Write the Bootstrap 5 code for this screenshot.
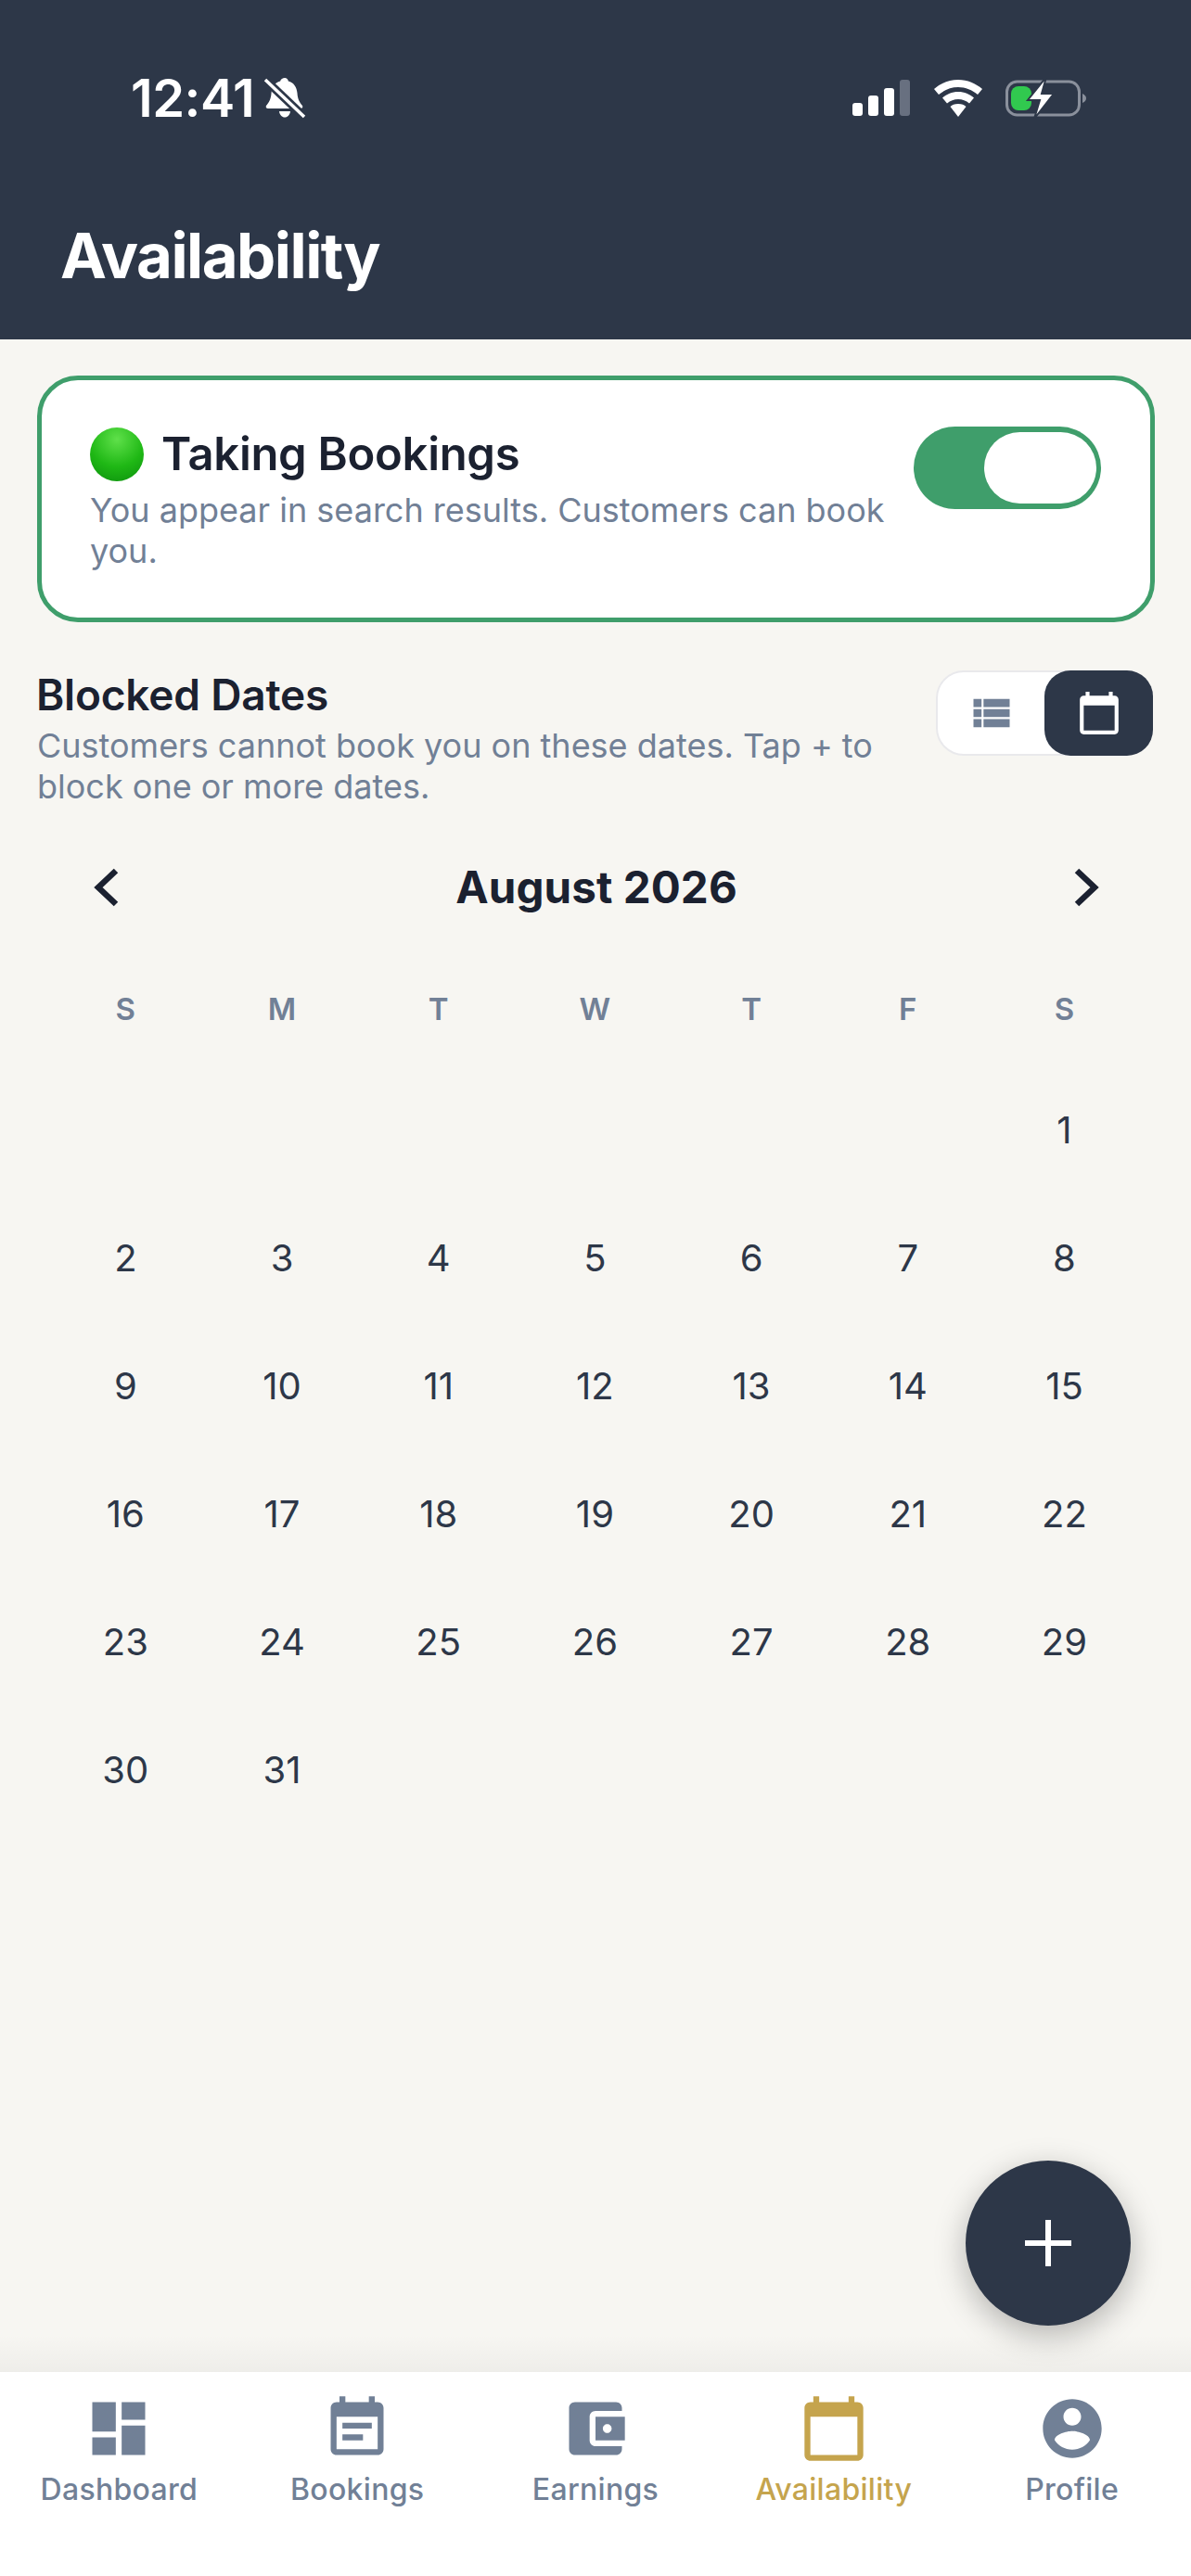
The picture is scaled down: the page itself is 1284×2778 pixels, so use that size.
<!DOCTYPE html>
<html lang="en">
<head>
  <meta charset="UTF-8">
  <title>Availability</title>
  <link href="https://cdn.jsdelivr.net/npm/bootstrap@5.3.3/dist/css/bootstrap.min.css" rel="stylesheet">
  <style>
    body { font-family: Inter, "Liberation Sans", sans-serif; background: #f7f6f2; color: #1b2130; width: 1284px; height: 2778px; overflow: hidden; }
    .app-shell { height: 2778px; position: relative; }
    .top-bar { height: 366px; background: #2d3748; color: #fff; padding: 80px 66px 0; }
    .status-row { height: 52px; padding: 0 0 0 75px; }
    .clock { font-size: 56px; font-weight: 600; letter-spacing: -0.5px; line-height: 52px; }
    .screen-title { font-size: 67px; font-weight: 700; letter-spacing: -1.5px; line-height: 72px; margin: 108px 0 0 -1px; }
    .main-area { padding: 39px 39px 0 40px; position: relative; }
    .book-card { height: 266px; border: 5px solid #3f9e6b; border-radius: 44px; background: #fff; padding: 50px 53px 0 52px; }
    .book-title { font-size: 49px; font-weight: 600; line-height: 60px; letter-spacing: -0.3px; gap: 19px; }
    .green-dot { width: 58px; height: 58px; border-radius: 50%; background: radial-gradient(circle at 50% 22%, #5fe04a 0%, #1fb815 55%, #0b8f0d 100%); flex: none; }
    .muted-line { font-size: 36px; line-height: 44px; color: #718096; margin: 0; }
    .switch-track { width: 202px; height: 89px; flex: none; border-radius: 45px; background: #3f9e6b; padding: 6px 5px 6px 76px; }
    .switch-knob { height: 100%; background: #fff; border-radius: 40px; }
    .blocked-head { margin-top: 52px; }
    .blocked-title { font-size: 46px; font-weight: 600; line-height: 52px; margin: 0 0 7px -1px; letter-spacing: -0.2px; }
    .view-switch { width: 234px; height: 92px; flex: none; border-radius: 30px; background: #fff; border: 2px solid #e9e9ec; margin-right: 2px; }
    .view-btn { width: 115px; border-radius: 28px; }
    .view-btn.on { width: 117px; background: #2d3748; margin: -2px -2px -2px 0; }
    .cal-head { padding: 0 59px 0 60px; margin-top: 52px; height: 70px; }
    .month-name { font-size: 47.500px; font-weight: 700; letter-spacing: 0.1px; }
    .cal-grid { display: grid; grid-template-columns: repeat(7, 168.7px); grid-template-rows: 122px; grid-auto-rows: 138px; margin: 36px 0 0 11px; }
    .cal-grid > div { display: flex; align-items: center; justify-content: center; font-size: 40px; color: #2d3748; }
    .cal-grid > .week-cell { font-size: 33px; font-weight: 600; color: #718096; }
    .plus-fab { position: absolute; left: 1041px; top: 2330px; width: 178px; height: 178px; border-radius: 50%; background: #2d3748; box-shadow: 0 10px 34px rgba(0,0,0,.28); }
    .fade-strip { position: absolute; left: 0; right: 0; top: 2518px; height: 40px; background: linear-gradient(to bottom, rgba(0,0,0,0), rgba(0,0,0,.035)); }
    .tab-bar { position: absolute; left: 0; right: 0; top: 2558px; bottom: 0; background: #fff; }
    .tab-item { width: 257px; margin-top: 23px; color: #718096; font-size: 32px; font-weight: 500; line-height: 40px; letter-spacing: 0.3px; }
    .tab-item.on { color: #c5a44d; }
    .tab-item svg { display: block; margin-bottom: 8px; }
  </style>
</head>
<body>
  <div class="app-shell">
    <div class="top-bar">
      <div class="status-row d-flex align-items-center">
        <span class="clock">12:41</span>
        <svg class="ms-2" width="50" height="50" viewBox="0 0 50 50"><path d="M25 3c2 0 3.500 1.500 3.800 3.500 6 1.600 9.200 6.500 9.700 13 .4 6 2 9.500 5.500 13.500.8 1.500 0 3-2 3H7c-2 0-2.800-1.500-2-3 3.500-4 5.100-7.500 5.500-13.500.5-6.500 3.700-11.400 9.700-13C20.500 4.500 23 3 25 3z" fill="#fff"/><path d="M19 39h12c-.5 4-3 6.500-6 6.500s-5.500-2.500-6-6.500z" fill="#fff"/><path d="M4 5l42 40" stroke="#2d3748" stroke-width="9"/><path d="M4 5l42 40" stroke="#fff" stroke-width="3.500"/></svg>
        <div class="ms-auto d-flex align-items-center" style="margin-right:46px">
          <svg width="64" height="42" viewBox="0 0 64 42"><rect x="1" y="26" width="11" height="14" rx="3" fill="#fff"/><rect x="18" y="18" width="11" height="22" rx="3" fill="#fff"/><rect x="35" y="10" width="11" height="30" rx="3" fill="#fff"/><rect x="52" y="1" width="11" height="39" rx="3" fill="#687080"/></svg>
          <svg class="ms-4" width="54" height="42" viewBox="0 0 54 42"><path d="M27 1c10 0 19 4 26 10l-5 6c-6-5-13-8-21-8S12 12 6 17l-5-6C8 5 17 1 27 1z" fill="#fff"/><path d="M27 14c7 0 12 2.500 17 6.500l-5 6c-3.500-3-7.500-4.500-12-4.500s-8.500 1.500-12 4.500l-5-6C15 16.500 20 14 27 14z" fill="#fff"/><path d="M27 27c4 0 6.500 1.200 8.500 3L27 41l-8.500-11c2-1.800 4.500-3 8.500-3z" fill="#fff"/></svg>
          <svg class="ms-4" width="88" height="44" viewBox="0 0 88 44"><rect x="1.500" y="4" width="78" height="36" rx="11" fill="none" stroke="#8a909c" stroke-width="3"/><path d="M83 17c2.500 1 4 3 4 5s-1.500 4-4 5z" fill="#8a909c"/><rect x="6" y="9" width="22" height="26" rx="8" fill="#31c94f"/><path d="M44-1 24 24h13l-6 20 21-27H39z" fill="#fff" stroke="#2d3748" stroke-width="2"/></svg>
        </div>
      </div>
      <h1 class="screen-title">Availability</h1>
    </div>

    <div class="main-area">
      <div class="book-card d-flex justify-content-between">
        <div style="width:870px">
          <div class="book-title d-flex align-items-center"><span class="green-dot"></span>Taking Bookings</div>
          <p class="muted-line mt-2">You appear in search results. Customers can book you.</p>
        </div>
        <div class="switch-track"><div class="switch-knob"></div></div>
      </div>

      <div class="blocked-head d-flex justify-content-between">
        <div style="width:920px">
          <h2 class="blocked-title">Blocked Dates</h2>
          <p class="muted-line">Customers cannot book you on these dates. Tap + to block one or more dates.</p>
        </div>
        <div class="view-switch d-flex">
          <div class="view-btn d-flex align-items-center justify-content-center"><svg width="52" height="52" viewBox="0 0 24 24" fill="#718096"><path d="M3 14h4v-4H3v4zm0 5h4v-4H3v4zM3 9h4V5H3v4zm5 5h13v-4H8v4zm0 5h13v-4H8v4zM8 5v4h13V5H8z"/></svg></div>
          <div class="view-btn on d-flex align-items-center justify-content-center"><svg width="50" height="50" viewBox="0 0 24 24" fill="#fff"><path d="M20 3h-1V1h-2v2H7V1H5v2H4c-1.100 0-2 .9-2 2v16c0 1.100.9 2 2 2h16c1.100 0 2-.9 2-2V5c0-1.100-.9-2-2-2zm0 18H4V8h16v13z"/></svg></div>
        </div>
      </div>

      <div class="cal-head d-flex align-items-center justify-content-between">
        <svg width="30" height="46" viewBox="0 0 30 46"><path d="M25 5 6 23l19 18" fill="none" stroke="#1b2130" stroke-width="6.500"/></svg>
        <span class="month-name">August 2026</span>
        <svg width="30" height="46" viewBox="0 0 30 46"><path d="m5 5 19 18L5 41" fill="none" stroke="#1b2130" stroke-width="6.500"/></svg>
      </div>

      <div class="cal-grid" id="calGrid"></div>
    </div>

    <div class="fade-strip"></div>
    <div class="plus-fab d-flex align-items-center justify-content-center">
      <svg width="54" height="54" viewBox="0 0 54 54"><path d="M27 2v50M2 27h50" stroke="#fff" stroke-width="6"/></svg>
    </div>

    <div class="tab-bar">
      <div class="d-flex">
        <div class="tab-item d-flex flex-column align-items-center"><svg width="76" height="76" viewBox="0 0 24 24" fill="currentColor"><path d="M3 13h8V3H3v10zm0 8h8v-6H3v6zm10 0h8V11h-8v10zm0-18v6h8V3h-8z"/></svg>Dashboard</div>
        <div class="tab-item d-flex flex-column align-items-center"><svg width="76" height="76" viewBox="0 0 24 24" fill="currentColor"><path d="M17 10H7v2h10v-2zm2-7h-1V1h-2v2H8V1H6v2H5c-1.110 0-1.990.9-1.990 2L3 19c0 1.100.89 2 2 2h14c1.100 0 2-.9 2-2V5c0-1.100-.9-2-2-2zm0 16H5V8h14v11zm-5-5H7v2h7v-2z"/></svg>Bookings</div>
        <div class="tab-item d-flex flex-column align-items-center"><svg width="76" height="76" viewBox="0 0 24 24" fill="currentColor"><path d="M21 18v1c0 1.100-.9 2-2 2H5c-1.110 0-2-.9-2-2V5c0-1.100.89-2 2-2h14c1.100 0 2 .9 2 2v1h-9c-1.110 0-2 .9-2 2v8c0 1.100.89 2 2 2h9zm-9-2h10V8H12v8zm4-2.500c-.83 0-1.500-.67-1.500-1.500s.67-1.500 1.500-1.500 1.500.67 1.500 1.500-.67 1.500-1.500 1.500z"/></svg>Earnings</div>
        <div class="tab-item on d-flex flex-column align-items-center"><svg width="76" height="76" viewBox="0 0 24 24" fill="currentColor"><path d="M20 3h-1V1h-2v2H7V1H5v2H4c-1.100 0-2 .9-2 2v16c0 1.100.9 2 2 2h16c1.100 0 2-.9 2-2V5c0-1.100-.9-2-2-2zm0 18H4V8h16v13z"/></svg>Availability</div>
        <div class="tab-item d-flex flex-column align-items-center"><svg width="76" height="76" viewBox="0 0 24 24" fill="currentColor"><path d="M12 2C6.480 2 2 6.480 2 12s4.480 10 10 10 10-4.480 10-10S17.520 2 12 2zm0 3c1.660 0 3 1.340 3 3s-1.340 3-3 3-3-1.340-3-3 1.340-3 3-3zm0 14.200c-2.500 0-4.710-1.280-6-3.220.03-1.990 4-3.080 6-3.080 1.990 0 5.970 1.090 6 3.080-1.290 1.940-3.500 3.220-6 3.220z"/></svg>Profile</div>
      </div>
    </div>
  </div>

  <script>
    // August 2026 starts on a Saturday
    const grid = document.getElementById("calGrid");
    let html = "";
    ["S", "M", "T", "W", "T", "F", "S"].forEach(d => { html += `<div class="week-cell">${d}</div>`; });
    for (let i = 0; i < 6; i++) html += "<div></div>";
    for (let d = 1; d <= 31; d++) html += `<div>${d}</div>`;
    grid.innerHTML = html;
  </script>
  <script src="https://cdn.jsdelivr.net/npm/bootstrap@5.3.3/dist/js/bootstrap.bundle.min.js"></script>
</body>
</html>
